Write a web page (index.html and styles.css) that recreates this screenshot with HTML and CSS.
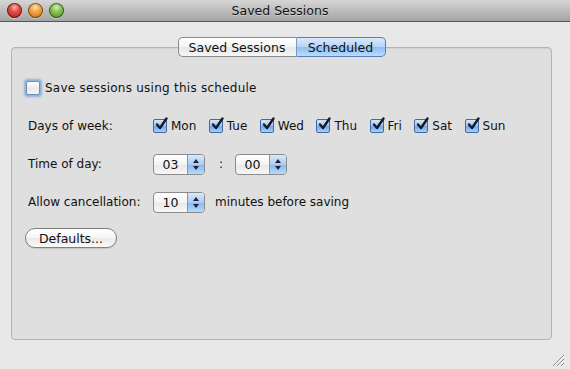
FILE: index.html
```html
<!DOCTYPE html>
<html>
<head>
<meta charset="utf-8">
<link rel="stylesheet" href="styles.css">
</head>
<body>
<div class="window">
  <div class="titlebar">
    <div class="lights">
      <span class="light red"></span>
      <span class="light orange"></span>
      <span class="light green"></span>
    </div>
    <div class="title">Saved Sessions</div>
  </div>
  <div class="content">
    <div class="tabs">
      <div class="tab tab-left">Saved Sessions</div>
      <div class="tab tab-right selected">Scheduled</div>
    </div>
    <div class="panel">
      <div class="row row-check">
        <span class="cb focus"></span>
        <span class="cb-label">Save sessions using this schedule</span>
      </div>
      <div class="row row-field">
        <span class="label">Days of week:</span>
        <div class="days">
          <label class="day"><span class="cb checked"><svg viewBox="0 0 14 14"><path d="M3 6.5 L6 10 L12.5 0.5"/></svg></span>Mon</label>
          <label class="day"><span class="cb checked"><svg viewBox="0 0 14 14"><path d="M3 6.5 L6 10 L12.5 0.5"/></svg></span>Tue</label>
          <label class="day"><span class="cb checked"><svg viewBox="0 0 14 14"><path d="M3 6.5 L6 10 L12.5 0.5"/></svg></span>Wed</label>
          <label class="day"><span class="cb checked"><svg viewBox="0 0 14 14"><path d="M3 6.5 L6 10 L12.5 0.5"/></svg></span>Thu</label>
          <label class="day"><span class="cb checked"><svg viewBox="0 0 14 14"><path d="M3 6.5 L6 10 L12.5 0.5"/></svg></span>Fri</label>
          <label class="day"><span class="cb checked"><svg viewBox="0 0 14 14"><path d="M3 6.5 L6 10 L12.5 0.5"/></svg></span>Sat</label>
          <label class="day"><span class="cb checked"><svg viewBox="0 0 14 14"><path d="M3 6.5 L6 10 L12.5 0.5"/></svg></span>Sun</label>
        </div>
      </div>
      <div class="row row-field">
        <span class="label">Time of day:</span>
        <div class="stepper">
          <span class="value">03</span>
          <span class="arrows"><svg viewBox="0 0 16 19"><path d="M5 8 L8 4 L11 8 Z"/><path d="M5 11 L8 15 L11 11 Z"/></svg></span>
        </div>
        <span class="colon">:</span>
        <div class="stepper">
          <span class="value">00</span>
          <span class="arrows"><svg viewBox="0 0 16 19"><path d="M5 8 L8 4 L11 8 Z"/><path d="M5 11 L8 15 L11 11 Z"/></svg></span>
        </div>
      </div>
      <div class="row row-field">
        <span class="label">Allow cancellation:</span>
        <div class="stepper">
          <span class="value">10</span>
          <span class="arrows"><svg viewBox="0 0 16 19"><path d="M5 8 L8 4 L11 8 Z"/><path d="M5 11 L8 15 L11 11 Z"/></svg></span>
        </div>
        <span class="after">minutes before saving</span>
      </div>
      <div class="row row-button">
        <button class="pill">Defaults...</button>
      </div>
    </div>
  </div>
  <svg class="grip" viewBox="0 0 14 14">
    <path d="M2 13 L13 2 M6 13 L13 6 M10 13 L13 10"/>
    <path class="hl" d="M3 13 L13 3 M7 13 L13 7 M11 13 L13 11"/>
  </svg>
</div>
</body>
</html>
```
FILE: styles.css
```css
* { box-sizing: border-box; }
html, body { margin: 0; padding: 0; }
body {
  width: 570px;
  height: 369px;
  overflow: hidden;
  background: #e8e8e8;
  font-family: "DejaVu Sans", "Liberation Sans", sans-serif;
  font-size: 12px;
  color: #111;
}
.window {
  position: relative;
  width: 570px;
  height: 369px;
  display: flex;
  flex-direction: column;
}
.titlebar {
  height: 22px;
  flex: none;
  display: flex;
  align-items: center;
  position: relative;
  background: linear-gradient(#d6d6d6, #bdbdbd 50%, #a4a4a4);
  border-bottom: 1px solid #555;
}
.lights {
  display: flex;
  gap: 6px;
  padding-left: 7px;
  position: relative;
  z-index: 1;
}
.light {
  width: 15px;
  height: 15px;
  border-radius: 50%;
  box-shadow: inset 0 0 0 1px rgba(0,0,0,0.45), 0 1px 0 rgba(255,255,255,0.35);
}
.red {
  background: radial-gradient(circle at 50% 30%, #f7b3b0 0, #e04f4a 35%, #b8261f 80%, #8e1a14 100%);
}
.orange {
  background: radial-gradient(circle at 50% 30%, #ffe0a8 0, #f2a84a 35%, #d07a17 80%, #a3590c 100%);
}
.green {
  background: radial-gradient(circle at 50% 30%, #d2f0b0 0, #8cc25c 35%, #5c962f 80%, #3f7119 100%);
}
.title {
  position: absolute;
  left: 0;
  right: 10px;
  text-align: center;
  color: #111;
  font-size: 12.5px;
  text-shadow: 0 1px 0 rgba(255,255,255,0.4);
}
.content {
  padding: 15px 18px 0 11px;
  display: flex;
  flex-direction: column;
}
.tabs {
  position: relative;
  z-index: 1;
  display: flex;
  justify-content: center;
  height: 20px;
  margin-bottom: -10px;
}
.tab {
  height: 20px;
  display: flex;
  align-items: center;
  justify-content: center;
  border: 1px solid #8a8a8a;
  background: linear-gradient(#ffffff, #f4f4f4 50%, #e6e6e6 51%, #f6f6f6);
  color: #111;
  font-size: 12.5px;
}
.tab-left {
  width: 118px;
  border-radius: 5px 0 0 5px;
  border-right: none;
}
.tab-right {
  width: 90px;
  border-radius: 0 5px 5px 0;
}
.tab.selected {
  border-color: #5b7fb2;
  background: linear-gradient(#dbeafc, #b5d3f7 50%, #8fbdf2 51%, #b9dcfc);
  border-left: 1px solid #7a98c4;
}
.panel {
  width: 541px;
  height: 293px;
  background: #dfdfdf;
  border: 1px solid #b4b4b4;
  border-radius: 4px;
  box-shadow: inset 0 1px 1px rgba(0,0,0,0.06);
  padding: 28px 0 0 14px;
  display: flex;
  flex-direction: column;
  gap: 14px;
}
.row {
  height: 24px;
  display: flex;
  align-items: center;
}
.row-check { gap: 5px; }
.cb-label { letter-spacing: 0.25px; }
.row-field { padding-left: 2px; }
.row-button { margin-left: -1px; margin-top: -2px; }
.label {
  width: 125px;
  flex: none;
}
.cb {
  width: 14px;
  height: 14px;
  flex: none;
  border-radius: 2px;
  position: relative;
}
.cb.focus {
  border: 1px solid #6f8fba;
  background: linear-gradient(#ffffff, #eaeaea 55%, #f4f4f4);
  box-shadow: 0 0 0 1px #8db4e6, 0 0 2px 2px rgba(95,145,215,0.6);
}
.cb.checked {
  border: 1px solid #3f6aa6;
  background: linear-gradient(#d6e7fb, #9cc4f0 50%, #6fa6e8 51%, #a9d0fa);
}
.cb svg {
  position: absolute;
  left: 0;
  top: -2px;
  width: 14px;
  height: 14px;
  overflow: visible;
}
.cb svg path {
  fill: none;
  stroke: #151a24;
  stroke-width: 2.4;
  stroke-linecap: round;
  stroke-linejoin: round;
}
.days {
  display: flex;
  gap: 12.5px;
}
.day {
  display: flex;
  align-items: center;
  gap: 4px;
}
.stepper {
  width: 52px;
  height: 21px;
  display: flex;
  border: 1px solid #8c8c8c;
  border-radius: 4px;
  overflow: hidden;
  background: linear-gradient(#ffffff, #f3f3f3 50%, #e8e8e8 51%, #f7f7f7);
}
.value {
  flex: 1;
  display: flex;
  align-items: center;
  justify-content: center;
  font-size: 12.5px;
}
.arrows {
  width: 17px;
  border-left: 1px solid #7b97c0;
  background: linear-gradient(#d9e9fc, #a9cdf5 50%, #86b8ef 51%, #b7dafb);
  display: flex;
}
.arrows svg {
  width: 16px;
  height: 19px;
}
.arrows path { fill: #1d2330; }
.colon {
  margin: 0 12px 0 14px;
}
.after {
  margin-left: 10px;
}
.pill {
  width: 92px;
  height: 20px;
  border: 1px solid #808080;
  border-radius: 10px;
  background: linear-gradient(#ffffff, #f6f6f6 50%, #e9e9e9 51%, #fbfbfb);
  font-family: inherit;
  font-size: 12.5px;
  color: #111;
  padding: 0;
  box-shadow: 0 1px 1px rgba(0,0,0,0.12);
}
.grip {
  position: absolute;
  right: 5px;
  bottom: 2px;
  width: 14px;
  height: 14px;
}
.grip path {
  stroke: #8a8a8a;
  stroke-width: 1;
  fill: none;
}
.grip path.hl { stroke: #fafafa; }
```
